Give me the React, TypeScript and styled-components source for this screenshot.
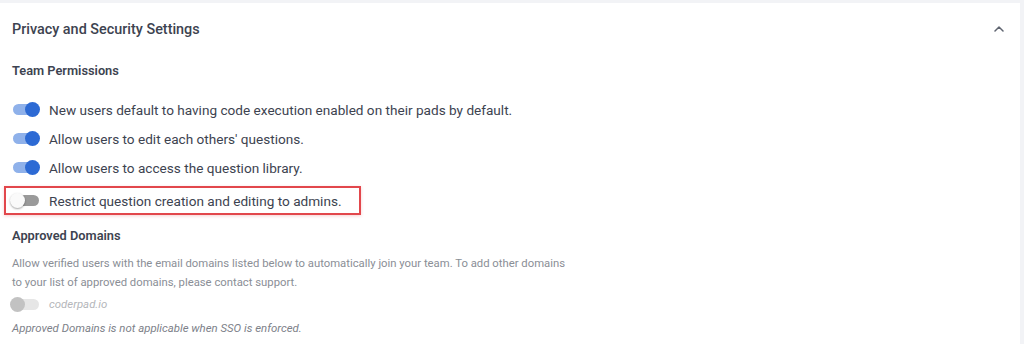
import React from 'react';
import styled, { createGlobalStyle } from 'styled-components';

const GlobalStyle = createGlobalStyle`
  html, body {
    margin: 0;
    padding: 0;
    background: #f2f3f6;
  }
  body {
    font-family: Roboto, "Liberation Sans", sans-serif;
    color: #3d4350;
  }
`;

type ToggleState = 'on' | 'off' | 'disabled';

const permissions: { label: string; state: ToggleState; highlight?: boolean }[] = [
  { label: 'New users default to having code execution enabled on their pads by default.', state: 'on' },
  { label: "Allow users to edit each others' questions.", state: 'on' },
  { label: 'Allow users to access the question library.', state: 'on' },
  { label: 'Restrict question creation and editing to admins.', state: 'off', highlight: true },
];

const Switch = ({ state }: { state: ToggleState }) => (
  <SwitchRoot>
    <Track $state={state} />
    <Thumb $state={state} />
  </SwitchRoot>
);

const ChevronUp = () => (
  <svg width="10" height="6" viewBox="0 0 10 6" fill="none">
    <path d="M1 5 5 1l4 4" stroke="#5f6470" strokeWidth="1.5" strokeLinecap="round" strokeLinejoin="round" />
  </svg>
);

const App = () => {
  return (
    <>
      <GlobalStyle />
      <Card>
        <Header>
          <Title>Privacy and Security Settings</Title>
          <ChevronUp />
        </Header>
        <Body>
          <SectionTitle>Team Permissions</SectionTitle>
          <List>
            {permissions.map((p) => (
              <Row key={p.label} $highlight={p.highlight}>
                <Switch state={p.state} />
                <Label>{p.label}</Label>
              </Row>
            ))}
          </List>
          <SectionTitle $top={12}>Approved Domains</SectionTitle>
          <Description>
            Allow verified users with the email domains listed below to automatically join your team. To add other domains
            to your list of approved domains, please contact support.
          </Description>
          <DomainRow>
            <Switch state="disabled" />
            <DomainName>coderpad.io</DomainName>
          </DomainRow>
          <Note>Approved Domains is not applicable when SSO is enforced.</Note>
        </Body>
      </Card>
    </>
  );
};

const Card = styled.section`
  margin-top: 3px;
  width: 1020px;
  height: 341px;
  background: #ffffff;
  box-sizing: border-box;
  overflow: hidden;
`;

const Header = styled.header`
  display: flex;
  align-items: center;
  justify-content: space-between;
  height: 52px;
  padding: 0 16px 0 12px;
`;

const Title = styled.h2`
  margin: 0;
  font-size: 14.4px;
  font-weight: 500;
  color: #3d4350;
`;

const Body = styled.div`
  padding: 0 12px;
`;

const SectionTitle = styled.h3<{ $top?: number }>`
  margin: ${({ $top }) => $top ?? 7}px 0 0;
  font-size: 12.8px;
  font-weight: 600;
  line-height: 18px;
  color: #3d4350;
`;

const List = styled.div`
  display: flex;
  flex-direction: column;
  margin-top: 15px;
`;

const Row = styled.div<{ $highlight?: boolean }>`
  display: flex;
  align-items: center;
  gap: 9px;
  box-sizing: border-box;
  height: 29px;
  width: fit-content;
  margin: ${({ $highlight }) => ($highlight ? '4px 0 0 -8px' : '0')};
  padding: ${({ $highlight }) => ($highlight ? '0 17px 0 6px' : '0')};
  border: ${({ $highlight }) => ($highlight ? '2px solid #e2474c' : 'none')};
  box-shadow: ${({ $highlight }) => ($highlight ? '0 1px 3px rgba(226, 71, 76, 0.25)' : 'none')};
`;

const SwitchRoot = styled.span`
  position: relative;
  display: inline-block;
  width: 28px;
  height: 15px;
  flex-shrink: 0;
`;

const Track = styled.span<{ $state: ToggleState }>`
  position: absolute;
  left: 1px;
  right: 1px;
  top: 2px;
  height: 11px;
  border-radius: 6px;
  background: ${({ $state }) =>
    $state === 'on' ? '#8fb1ea' : $state === 'off' ? '#9a9a9a' : '#e6e6e6'};
`;

const Thumb = styled.span<{ $state: ToggleState }>`
  position: absolute;
  top: 0;
  left: ${({ $state }) => ($state === 'on' ? '13px' : '-2px')};
  width: 15px;
  height: 15px;
  border-radius: 50%;
  background: ${({ $state }) =>
    $state === 'on' ? '#2d6ad4' : $state === 'off' ? '#fafafa' : '#c2c2c2'};
  box-shadow: ${({ $state }) =>
    $state === 'off' ? '0 1px 2px rgba(0, 0, 0, 0.35)' : 'none'};
`;

const Label = styled.span`
  font-size: 13.6px;
  color: #3d4350;
  white-space: nowrap;
`;

const Description = styled.p`
  margin: 9px 0 0;
  width: 558px;
  font-size: 11.3px;
  line-height: 19px;
  color: #8a8e96;
`;

const DomainRow = styled.div`
  display: flex;
  align-items: center;
  gap: 9px;
  margin-top: 1px;
  height: 22px;
`;

const DomainName = styled.span`
  font-style: italic;
  font-size: 11.4px;
  color: #b4b6ba;
`;

const Note = styled.p`
  margin: 5px 0 0;
  font-style: italic;
  font-size: 11.4px;
  line-height: 16px;
  color: #7d8189;
`;

export default App;
